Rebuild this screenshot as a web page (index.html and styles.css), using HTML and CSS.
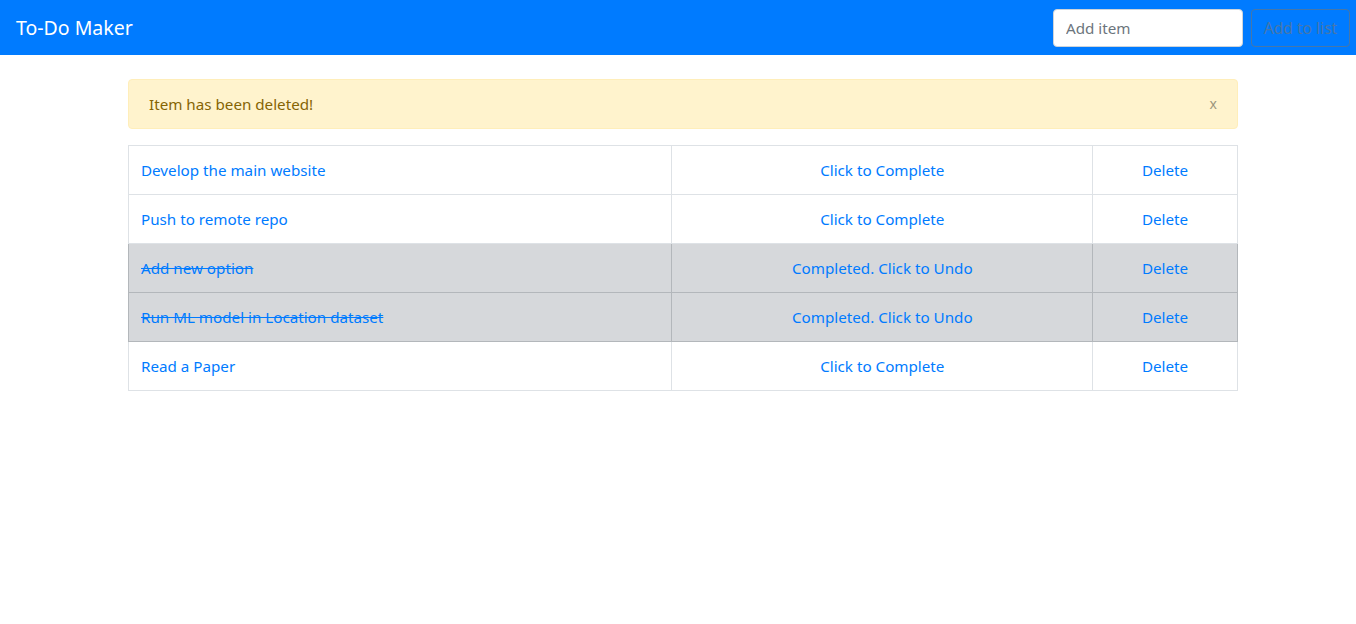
FILE: index.html
```html
<!DOCTYPE html>
<html lang="en">
<head>
<meta charset="utf-8">
<title>To-Do Maker</title>
<link rel="stylesheet" href="styles.css">
</head>
<body>
<nav class="navbar">
  <a class="brand" href="#">To-Do Maker</a>
  <form class="add-form">
    <input class="form-control" type="text" placeholder="Add item">
    <button class="btn-add" type="button" disabled>Add to list</button>
  </form>
</nav>
<main class="container">
  <div class="alert">
    <span>Item has been deleted!</span>
    <button class="close" type="button">x</button>
  </div>
  <table class="todo-table">
    <tbody>
      <tr>
        <td class="col-name"><a href="#">Develop the main website</a></td>
        <td class="col-status"><a href="#">Click to Complete</a></td>
        <td class="col-del"><a href="#">Delete</a></td>
      </tr>
      <tr>
        <td class="col-name"><a href="#">Push to remote repo</a></td>
        <td class="col-status"><a href="#">Click to Complete</a></td>
        <td class="col-del"><a href="#">Delete</a></td>
      </tr>
      <tr class="done">
        <td class="col-name"><a href="#">Add new option</a></td>
        <td class="col-status"><a href="#">Completed. Click to Undo</a></td>
        <td class="col-del"><a href="#">Delete</a></td>
      </tr>
      <tr class="done">
        <td class="col-name"><a href="#">Run ML model in Location dataset</a></td>
        <td class="col-status"><a href="#">Completed. Click to Undo</a></td>
        <td class="col-del"><a href="#">Delete</a></td>
      </tr>
      <tr>
        <td class="col-name"><a href="#">Read a Paper</a></td>
        <td class="col-status"><a href="#">Click to Complete</a></td>
        <td class="col-del"><a href="#">Delete</a></td>
      </tr>
    </tbody>
  </table>
</main>
</body>
</html>
```

FILE: styles.css
```css
* { box-sizing: border-box; }

body {
  margin: 0;
  font-family: "Noto Sans", "Open Sans", sans-serif;
  font-size: 15.2px;
  line-height: 24px;
  color: #212529;
  background: #fff;
}

.navbar {
  height: 55px;
  background: #007bff;
  display: flex;
  align-items: center;
  justify-content: space-between;
  padding: 0 6px 0 16px;
}

.brand {
  color: #fff;
  font-size: 19.5px;
  line-height: 30px;
  text-decoration: none;
}

.add-form {
  display: flex;
  align-items: center;
  gap: 8px;
}

.form-control {
  width: 190px;
  height: 38px;
  padding: 6px 12px;
  font: inherit;
  color: #495057;
  background: #fff;
  border: 1px solid #ced4da;
  border-radius: 4px;
}

.form-control::placeholder { color: #6c757d; }

.btn-add {
  width: 99px;
  height: 38px;
  padding: 6px 10px;
  font: inherit;
  font-size: 15.6px;
  color: #6c757d;
  background: transparent;
  border: 1px solid #6c757d;
  border-radius: 4px;
  opacity: .65;
  white-space: nowrap;
  overflow: hidden;
}

.container {
  width: 1110px;
  margin: 24px 0 0 128px;
}

.alert {
  display: flex;
  justify-content: space-between;
  align-items: center;
  padding: 12px 20px;
  margin-bottom: 16px;
  color: #856404;
  background: #fff3cd;
  border: 1px solid #ffeeba;
  border-radius: 4px;
}

.close {
  background: none;
  border: 0;
  padding: 0;
  font: inherit;
  font-size: 14px;
  line-height: 20px;
  color: #000;
  opacity: .4;
}

.todo-table {
  width: 100%;
  border-collapse: collapse;
  border: 1px solid #dee2e6;
}

.todo-table td {
  padding: 12px;
  border: 1px solid #dee2e6;
  vertical-align: top;
}

.todo-table a {
  color: #007bff;
  text-decoration: none;
}

.col-name { width: 544px; }
.col-status { width: 421px; text-align: center; }
.col-del { width: 145px; text-align: center; }

.done td {
  background: #d6d8db;
  border-color: #b3b7bb;
}

.done .col-name a { text-decoration: line-through; }
```
